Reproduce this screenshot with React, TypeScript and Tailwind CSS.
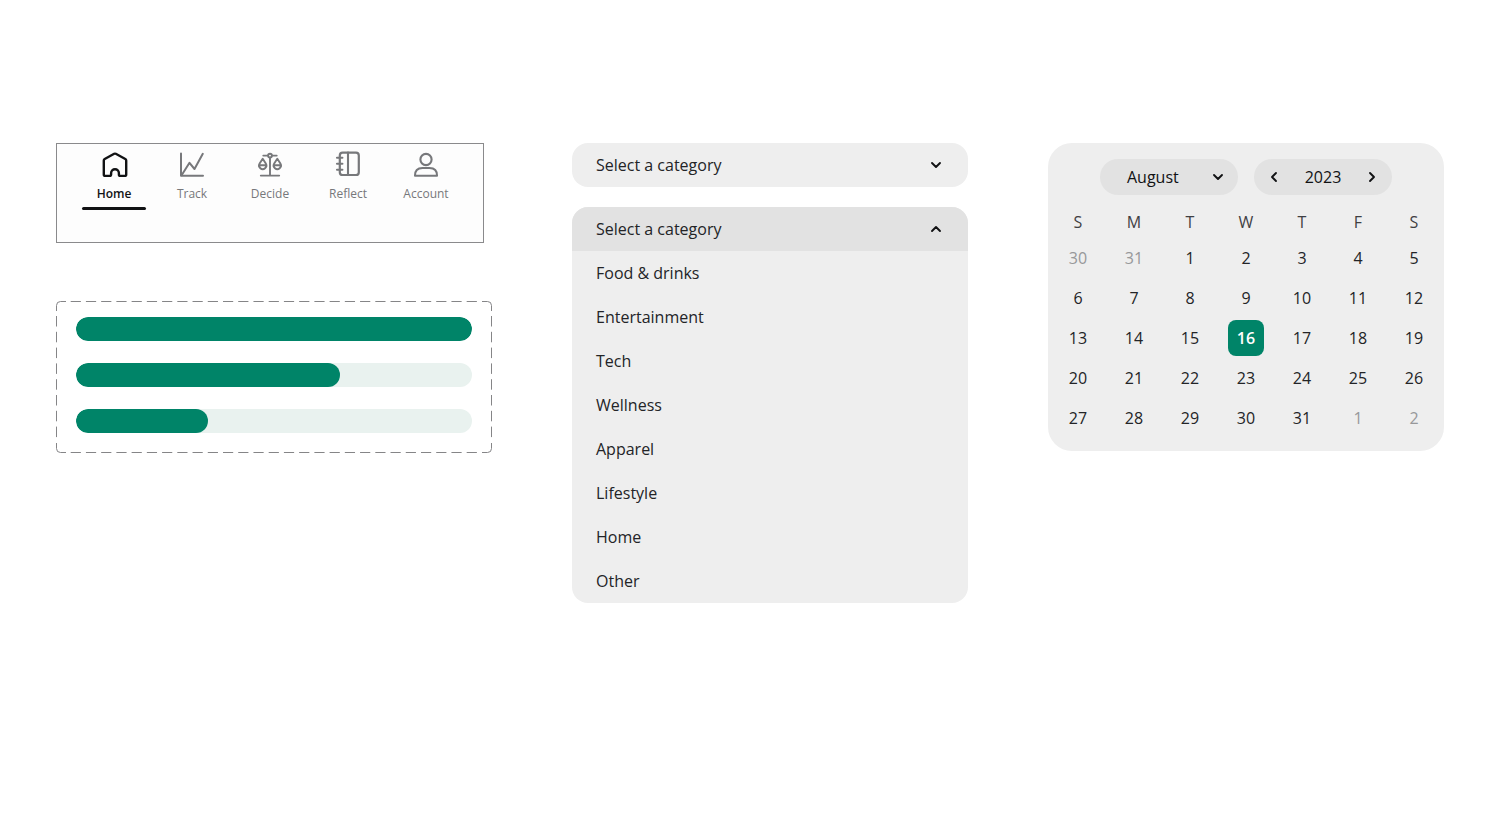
import React from "react";

const tabs = [
  { name: "Home", icon: <HomeIcon />, active: true },
  { name: "Track", icon: <TrackIcon />, active: false },
  { name: "Decide", icon: <DecideIcon />, active: false },
  { name: "Reflect", icon: <ReflectIcon />, active: false },
  { name: "Account", icon: <AccountIcon />, active: false },
];

const categories = [
  "Food & drinks",
  "Entertainment",
  "Tech",
  "Wellness",
  "Apparel",
  "Lifestyle",
  "Home",
  "Other",
];

const weekdays = ["S", "M", "T", "W", "T", "F", "S"];
const weekdayNames = ["Sunday", "Monday", "Tuesday", "Wednesday", "Thursday", "Friday", "Saturday"];

const weeks = [
  [30, 31, 1, 2, 3, 4, 5],
  [6, 7, 8, 9, 10, 11, 12],
  [13, 14, 15, 16, 17, 18, 19],
  [20, 21, 22, 23, 24, 25, 26],
  [27, 28, 29, 30, 31, 1, 2],
];

function Icon({ children }: { children: React.ReactNode }) {
  return (
    <svg
      className="size-7"
      viewBox="0 0 28 28"
      fill="none"
      stroke="currentColor"
      strokeWidth="2"
      strokeLinecap="round"
      strokeLinejoin="round"
      aria-hidden="true"
    >
      {children}
    </svg>
  );
}

function HomeIcon() {
  return (
    <Icon>
      <path
        strokeWidth="2.4"
        d="M14.2 2.8 Q15 2.4 15.8 2.8 L25.3 8 Q26.2 8.5 26.2 9.5 V23.4 Q26.2 24.9 24.7 24.9 H20.3 Q18.9 24.9 18.9 23.5 V22.2 a3.9 3.9 0 0 0 -7.8 0 V23.5 Q11.1 24.9 9.7 24.9 H5.3 Q3.8 24.9 3.8 23.4 V9.5 Q3.8 8.5 4.7 8 Z"
      />
    </Icon>
  );
}

function TrackIcon() {
  return (
    <Icon>
      <path d="M3 2.6 V24.8 H25" />
      <path d="M3.6 24.2 L11.5 11.8 L16.5 18 L24.8 2.8" />
    </Icon>
  );
}

function DecideIcon() {
  return (
    <Icon>
      <g strokeWidth="1.9">
        <circle cx="14" cy="4.6" r="1.9" />
        <path d="M7.3 4.6 H12 M16 4.6 H20.7 M14 6.6 V24.6 M4.8 24.6 H23.2" />
        <path d="M6.7 7.8 L3.6 12.6 a3.65 3.65 0 1 0 6.2 0 Z M3.4 14.3 H10" />
        <path d="M21.3 7.8 L18.2 12.6 a3.65 3.65 0 1 0 6.2 0 Z M18 14.3 H24.6" />
      </g>
    </Icon>
  );
}

function ReflectIcon() {
  return (
    <Icon>
      <rect x="5.8" y="1.6" width="19" height="22.4" rx="2.8" strokeWidth="2.2" />
      <path d="M14 1.6 V24 M3 6.8 H8.4 M3 12.8 H8.4 M3 18.8 H8.4" strokeWidth="2.1" />
    </Icon>
  );
}

function AccountIcon() {
  return (
    <Icon>
      <circle cx="14" cy="8.5" r="5.6" strokeWidth="2.1" />
      <path strokeWidth="2.1" d="M3 24.7 Q2.8 17 10.5 17 H17.5 Q25.2 17 25 24.7 Z" />
    </Icon>
  );
}

function Chevron({ d }: { d: string }) {
  return (
    <svg
      className="size-4 text-[#111214]"
      viewBox="0 0 16 16"
      fill="none"
      stroke="currentColor"
      strokeWidth="1.9"
      strokeLinecap="round"
      strokeLinejoin="round"
      aria-hidden="true"
    >
      <path d={d} />
    </svg>
  );
}

const down = "M4 6 L8 10 L12 6";
const up = "M4 10 L8 6 L12 10";
const left = "M10 4 L6 8 L10 12";
const right = "M6 4 L10 8 L6 12";

function TabBar() {
  return (
    <nav className="mr-2 flex h-[100px] justify-center gap-3.5 border border-[#8a8a8c] bg-[#fdfdfd] pt-[7px]">
      {tabs.map((tab) => (
        <a
          key={tab.name}
          href="#"
          aria-current={tab.active ? "page" : undefined}
          className={
            tab.active
              ? "flex w-16 flex-col items-center font-semibold text-[#111214]"
              : "flex w-16 flex-col items-center font-medium text-[#77787b]"
          }
        >
          {tab.icon}
          <span className="mt-[7px] text-xs leading-4">{tab.name}</span>
          {tab.active && <span className="mt-[5px] h-[3px] w-16 rounded-full bg-[#111214]" />}
        </a>
      ))}
    </nav>
  );
}

function DashedFrame() {
  return (
    <svg
      className="pointer-events-none absolute inset-0 size-full"
      viewBox="0 0 436 152"
      preserveAspectRatio="none"
      fill="none"
      stroke="#858587"
      aria-hidden="true"
    >
      <path d="M.5 10 V4.5 a4 4 0 0 1 4 -4 H10 M426 .5 H431.5 a4 4 0 0 1 4 4 V10 M435.5 142 V147.5 a4 4 0 0 1 -4 4 H426 M10 151.5 H4.5 a4 4 0 0 1 -4 -4 V142" />
      <path d="M14.7 .5 H421.5 M14.7 151.5 H421.5" strokeDasharray="10.2 5.03" />
      <path d="M.5 15 V137 M435.5 15 V137" strokeDasharray="10.5 5.3" />
    </svg>
  );
}

function ProgressPanel() {
  return (
    <section aria-label="Progress" className="relative flex flex-col gap-[22px] px-5 pt-4 pb-5">
      <DashedFrame />
      {[3, 2, 1].map((third) => (
        <div
          key={third}
          role="progressbar"
          aria-label={`${third} of 3`}
          aria-valuemin={0}
          aria-valuemax={3}
          aria-valuenow={third}
          className="h-6 overflow-hidden rounded-full bg-[#e9f2ef]"
        >
          <div className="h-full rounded-full bg-[#008468]" style={{ width: `${(third * 100) / 3}%` }} />
        </div>
      ))}
    </section>
  );
}

function CategoryMenus() {
  return (
    <div className="flex flex-col gap-5">
      <button
        type="button"
        aria-expanded="false"
        className="flex h-11 items-center justify-between rounded-2xl bg-[#eeeeee] px-6"
      >
        Select a category
        <Chevron d={down} />
      </button>
      <div className="overflow-hidden rounded-2xl bg-[#eeeeee]">
        <button
          type="button"
          aria-expanded="true"
          className="flex h-11 w-full items-center justify-between bg-[#e2e2e2] px-6"
        >
          Select a category
          <Chevron d={up} />
        </button>
        <ul>
          {categories.map((category) => (
            <li key={category}>
              <button type="button" className="h-11 w-full px-6 text-left">
                {category}
              </button>
            </li>
          ))}
        </ul>
      </div>
    </div>
  );
}

function Calendar() {
  return (
    <section aria-label="Calendar" className="rounded-3xl bg-[#eeeeee] px-0.5 pt-4 pb-[13px]">
      <div className="flex justify-center gap-4 font-medium text-[#111214]">
        <button
          type="button"
          className="flex h-9 w-[138px] items-center justify-between rounded-full bg-[#e2e2e2] pr-3 pl-[27px]"
        >
          August
          <Chevron d={down} />
        </button>
        <div className="flex h-9 w-[138px] items-center justify-between rounded-full bg-[#e2e2e2] px-3">
          <button type="button" aria-label="Previous year">
            <Chevron d={left} />
          </button>
          2023
          <button type="button" aria-label="Next year">
            <Chevron d={right} />
          </button>
        </div>
      </div>
      <table className="mt-[11px] w-full table-fixed text-center">
        <thead>
          <tr>
            {weekdays.map((day, i) => (
              <th key={i} scope="col" abbr={weekdayNames[i]} className="h-8 p-0 font-medium text-[#3f4043]">
                {day}
              </th>
            ))}
          </tr>
        </thead>
        <tbody>
          {weeks.map((week, w) => (
            <tr key={w}>
              {week.map((day, d) => {
                const outside = (w === 0 && day > 7) || (w === 4 && day < 7);
                const selected = w === 2 && day === 16;
                return (
                  <td key={d} className="h-10 p-0">
                    <button
                      type="button"
                      className={
                        selected
                          ? "size-9 rounded-lg bg-[#008468] font-semibold text-white"
                          : outside
                            ? "size-9 text-[#97989a]"
                            : "size-9"
                      }
                    >
                      {day}
                    </button>
                  </td>
                );
              })}
            </tr>
          ))}
        </tbody>
      </table>
    </section>
  );
}

export default function App() {
  return (
    <main className="grid min-h-screen grid-cols-[109fr_99fr_99fr] items-start gap-20 bg-white px-14 pt-[143px] font-['Open_Sans','Noto_Sans',sans-serif] text-base leading-6 text-[#232427]">
      <div className="flex flex-col gap-[58px]">
        <TabBar />
        <ProgressPanel />
      </div>
      <CategoryMenus />
      <Calendar />
    </main>
  );
}
